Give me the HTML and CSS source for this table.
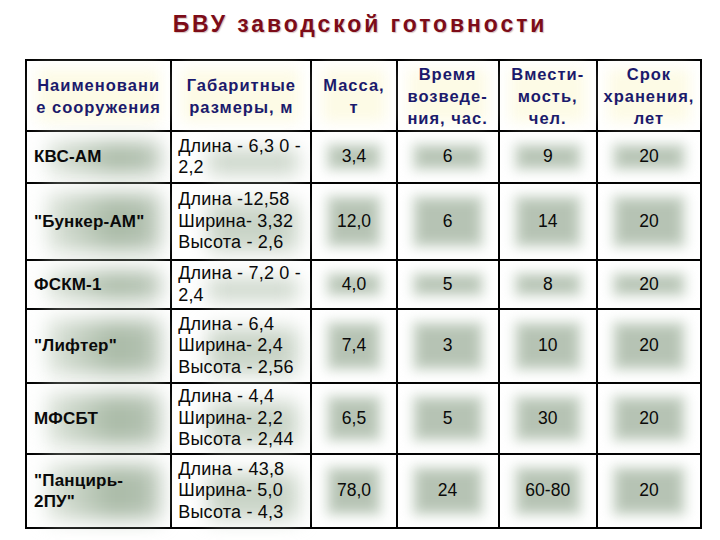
FILE: index.html
```html
<!DOCTYPE html>
<html lang="ru">
<head>
<meta charset="utf-8">
<title>БВУ заводской готовности</title>
<link rel="stylesheet" href="styles.css">
</head>
<body>
<h1 class="title">БВУ заводской готовности</h1>
<table class="grid">
  <colgroup>
    <col class="c1"><col class="c2"><col class="c3"><col class="c4"><col class="c5"><col class="c6">
  </colgroup>
  <thead>
    <tr class="rh">
      <th>Наименовани<br>е сооружения</th>
      <th>Габаритные<br>размеры, м</th>
      <th>Масса,<br>т</th>
      <th>Время<br>возведе-<br>ния, час.</th>
      <th>Вмести-<br>мость,<br>чел.</th>
      <th>Срок<br>хранения,<br>лет</th>
    </tr>
  </thead>
  <tbody>
    <tr class="r1">
      <td class="name">КВС-АМ</td>
      <td class="dims">Длина - 6,3 0 -<br>2,2</td>
      <td class="num">3,4</td><td class="num">6</td><td class="num">9</td><td class="num">20</td>
    </tr>
    <tr class="r2">
      <td class="name">"Бункер-АМ"</td>
      <td class="dims">Длина -12,58<br>Ширина- 3,32<br>Высота - 2,6</td>
      <td class="num">12,0</td><td class="num">6</td><td class="num">14</td><td class="num">20</td>
    </tr>
    <tr class="r3">
      <td class="name">ФСКМ-1</td>
      <td class="dims">Длина - 7,2 0 -<br>2,4</td>
      <td class="num">4,0</td><td class="num">5</td><td class="num">8</td><td class="num">20</td>
    </tr>
    <tr class="r4">
      <td class="name">"Лифтер"</td>
      <td class="dims">Длина - 6,4<br>Ширина- 2,4<br>Высота - 2,56</td>
      <td class="num">7,4</td><td class="num">3</td><td class="num">10</td><td class="num">20</td>
    </tr>
    <tr class="r5">
      <td class="name">МФСБТ</td>
      <td class="dims">Длина - 4,4<br>Ширина- 2,2<br>Высота - 2,44</td>
      <td class="num">6,5</td><td class="num">5</td><td class="num">30</td><td class="num">20</td>
    </tr>
    <tr class="r6">
      <td class="name">"Панцирь-<br>2ПУ"</td>
      <td class="dims">Длина - 43,8<br>Ширина- 5,0<br>Высота - 4,3</td>
      <td class="num">78,0</td><td class="num">24</td><td class="num">60-80</td><td class="num">20</td>
    </tr>
  </tbody>
</table>
</body>
</html>
```

FILE: styles.css
```css
html, body {
  margin: 0;
  padding: 0;
  background: #ffffff;
}

body {
  width: 720px;
  height: 540px;
  overflow: hidden;
  font-family: "Liberation Sans", Arial, sans-serif;
}

.title {
  margin: 0;
  padding-top: 11px;
  height: 48px;
  box-sizing: border-box;
  text-align: center;
  font-size: 23px;
  line-height: 26px;
  font-weight: bold;
  letter-spacing: 2.9px;
  color: #7d0c18;
  text-shadow: 1px 1px 1px rgba(120, 60, 60, 0.3);
}

.grid {
  margin-left: 25px;
  margin-top: 11px;
  width: 677px;
  border-collapse: collapse;
  table-layout: fixed;
}

.c1 { width: 145px; }
.c2 { width: 140px; }
.c3 { width: 85px; }
.c4 { width: 102px; }
.c5 { width: 98px; }
.c6 { width: 104px; }

.grid th,
.grid td {
  border: 2px solid #000;
  position: relative;
  padding: 0;
  vertical-align: middle;
  isolation: isolate;
}

.grid th {
  font-size: 16.5px;
  line-height: 22px;
  letter-spacing: 1px;
  font-weight: bold;
  color: #1b1a6c;
  text-align: center;
  background: #ffffff;
}

.grid td {
  font-size: 18px;
  line-height: 21.5px;
  color: #0a0a0a;
  background: #ffffff;
}

/* soft blurred plates behind cell text */
.grid td::before,
.grid th::before {
  content: "";
  position: absolute;
  z-index: -1;
}

.grid th::before {
  inset: 8px 10px;
  background: #fdfbe6;
  filter: blur(7px);
}

.grid td.num::before {
  inset: 17px 20px;
  background: #b6c3b4;
  box-shadow: 0 0 0 6px #d3ddd2;
  filter: blur(6px);
}

.grid td.name::before {
  inset: 10px 10px 8px 20px;
  background: linear-gradient(to right, #dfe6dd, #a9baa6 60%, #b9c6b7);
  filter: blur(10px);
}

.grid td.dims::before {
  inset: 18px 12px 8px 36px;
  background: #c9d4c7;
  filter: blur(10px);
}

.grid td.name {
  font-weight: bold;
  font-size: 17px;
  padding-left: 7px;
  letter-spacing: 0.2px;
}

.grid td.dims {
  padding-left: 6px;
  letter-spacing: 0.2px;
}

.grid td.num {
  text-align: center;
  font-size: 17.5px;
}

.rh { height: 71px; }
.r1 { height: 52px; }
.r2 { height: 77px; }
.r3 { height: 49px; }
.r4 { height: 74px; }
.r5 { height: 71px; }
.r6 { height: 74px; }
```
